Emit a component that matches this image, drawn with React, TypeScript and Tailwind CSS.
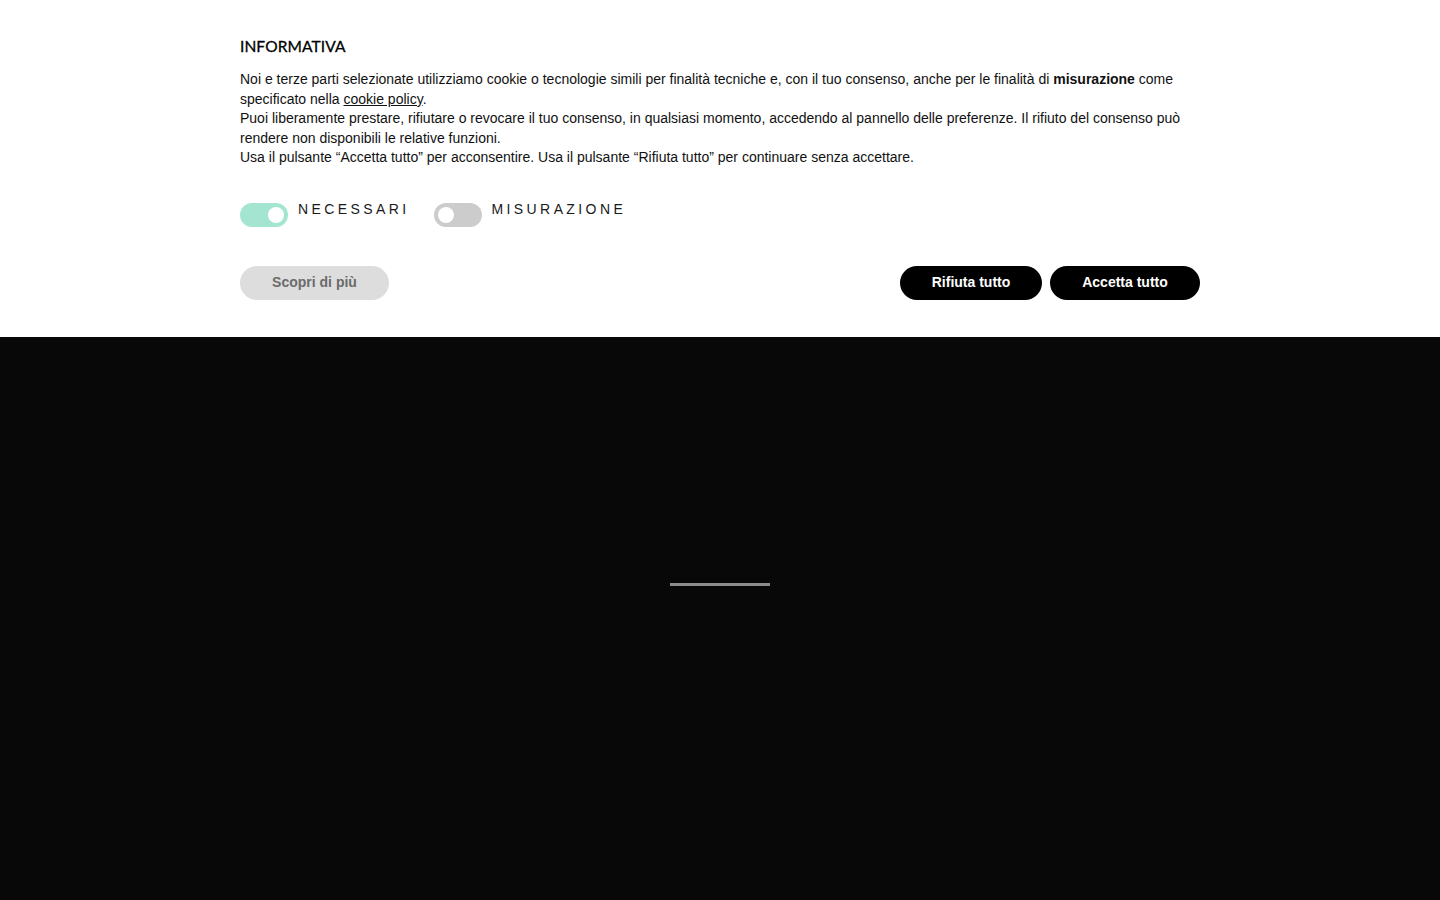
import { useState } from 'react';

function Toggle({ label, defaultOn }: { label: string; defaultOn?: boolean }) {
  const [on, setOn] = useState(!!defaultOn);
  return (
    <label className="flex items-start cursor-pointer select-none">
      <button
        type="button"
        onClick={() => setOn(!on)}
        className={`relative mt-[4px] h-6 w-12 shrink-0 rounded-full transition-colors ${on ? 'bg-[#a4e5d2]' : 'bg-[#cccccc]'}`}
      >
        <span
          className={`absolute top-1 h-4 w-4 rounded-full bg-white transition-all ${on ? 'left-[28px]' : 'left-1'}`}
        />
      </button>
      <span className="ml-[10px] text-[14px] leading-[20px] tracking-[3.4px] text-[#1a1a1a]">{label}</span>
    </label>
  );
}

export default function App() {
  return (
    <div className="flex min-h-[900px] flex-col bg-[#080808] font-['Liberation_Sans',Arial,sans-serif]">
      <div className="bg-white">
        <div className="mx-auto w-[960px] pt-[38px] pb-[37px]">
          <h2 className="font-['Lato',sans-serif] text-[15.5px] leading-[16px] tracking-[0.1px] text-[#000] uppercase [-webkit-text-stroke:0.3px_#000]">
            Informativa
          </h2>
          <div className="mt-[16px] text-[14px] leading-[19.5px] text-[#111]">
            <p>
              Noi e terze parti selezionate utilizziamo cookie o tecnologie simili per finalità tecniche e, con il tuo consenso, anche per le finalità di{' '}
              <b>misurazione</b> come specificato nella{' '}
              <a href="#" className="underline">cookie policy</a>.
            </p>
            <p>
              Puoi liberamente prestare, rifiutare o revocare il tuo consenso, in qualsiasi momento, accedendo al pannello delle preferenze. Il rifiuto del consenso può rendere non disponibili le relative funzioni.
            </p>
            <p>Usa il pulsante “Accetta tutto” per acconsentire. Usa il pulsante “Rifiuta tutto” per continuare senza accettare.</p>
          </div>
          <div className="mt-[31px] flex gap-[24px]">
            <Toggle label="NECESSARI" defaultOn />
            <Toggle label="MISURAZIONE" />
          </div>
          <div className="mt-[39px] flex items-center">
            <button className="h-[34px] w-[149px] rounded-full bg-[#dddddd] text-[14px] font-bold text-[#6b6b6b]">
              Scopri di più
            </button>
            <div className="ml-auto flex gap-2">
              <button className="h-[34px] w-[142px] rounded-full bg-black text-[14px] font-bold text-white">
                Rifiuta tutto
              </button>
              <button className="h-[34px] w-[150px] rounded-full bg-black text-[14px] font-bold text-white">
                Accetta tutto
              </button>
            </div>
          </div>
        </div>
      </div>
      <div className="flex flex-1 items-start justify-center pt-[246px]">
        <div className="h-[3px] w-[100px] bg-[#8c8c8c]" />
      </div>
    </div>
  );
}
